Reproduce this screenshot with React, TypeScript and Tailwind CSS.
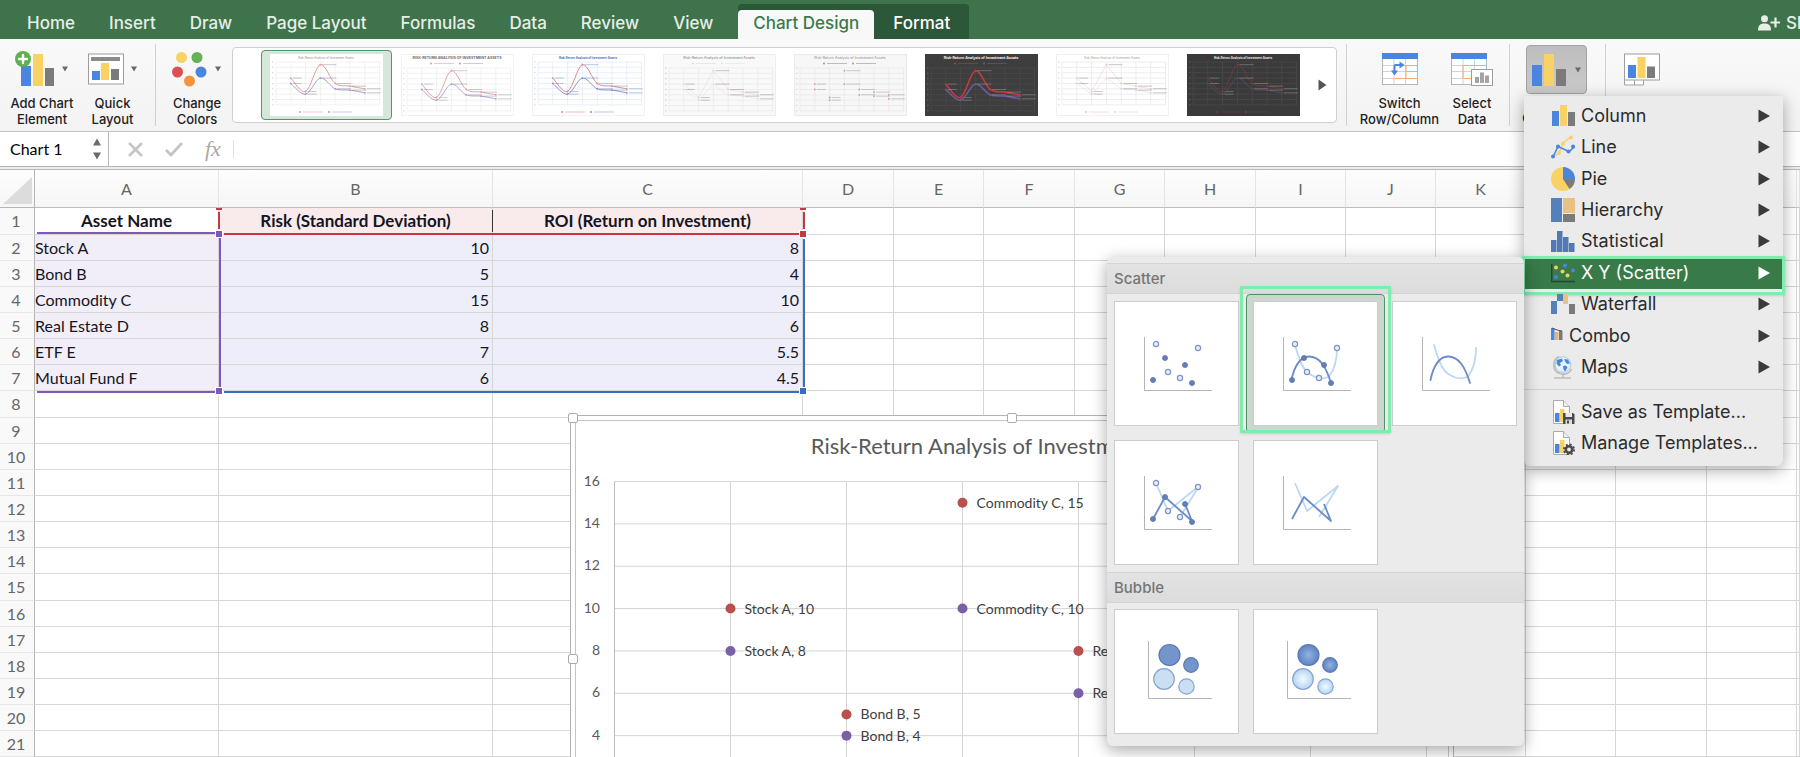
import React, { useState } from 'react';

type Asset = { name: string; risk: number; roi: number };

const assets: Asset[] = [
  { name: 'Stock A', risk: 10, roi: 8 },
  { name: 'Bond B', risk: 5, roi: 4 },
  { name: 'Commodity C', risk: 15, roi: 10 },
  { name: 'Real Estate D', risk: 8, roi: 6 },
  { name: 'ETF E', risk: 7, roi: 5.5 },
  { name: 'Mutual Fund F', risk: 6, roi: 4.5 },
];

const tabs = ['Home', 'Insert', 'Draw', 'Page Layout', 'Formulas', 'Data', 'Review', 'View'];
const columns = ['A', 'B', 'C', 'D', 'E', 'F', 'G', 'H', 'I', 'J', 'K', 'L', 'M', 'N', ''];
const columnWidths = [
  'w-[184px]',
  'w-[274px]',
  'w-[310px]',
  'w-[91px]',
  'w-[90px]',
  'w-[91px]',
  'w-[90px]',
  'w-[91px]',
  'w-[90px]',
  'w-[90px]',
  'w-[90px]',
  'w-[90px]',
  'w-[91px]',
  'w-[90px]',
  '',
];

const BLUE = '#4a86e0';
const YELLOW = '#f8d264';
const GRAY = '#7b7b7b';

/* ---------- small shared pieces ---------- */

const Caret = () => (
  <svg width="8" height="6" viewBox="0 0 8 6" className="shrink-0">
    <path d="M1 0.5h6L4 5.5z" fill="#6b6b6b" />
  </svg>
);

const Separator = () => <div className="my-[5px] w-px shrink-0 bg-[#d0d0d0]" />;

type RibbonButtonProps = {
  lines: [string, string];
  icon: React.ReactNode;
  caret?: boolean;
  className?: string;
};

const RibbonButton: React.FC<RibbonButtonProps> = ({ lines, icon, caret, className = '' }) => (
  <button type="button" className={`flex shrink-0 flex-col items-center ${className}`}>
    <span className="flex h-[56px] items-center gap-[6px] pt-1">
      {icon}
      {caret && <Caret />}
    </span>
    <span className="text-[13px] leading-4 font-medium whitespace-nowrap text-[#1e1e1e]">
      {lines[0]}
      <br />
      {lines[1]}
    </span>
  </button>
);

/* ---------- ribbon icons ---------- */

const AddElementIcon = () => (
  <svg width="40" height="36" viewBox="0 0 40 36">
    <rect x="6" y="15" width="10" height="20" fill={BLUE} />
    <rect x="18" y="3" width="10" height="32" fill={YELLOW} />
    <rect x="30" y="17" width="9" height="18" fill={GRAY} />
    <circle cx="8" cy="8" r="8" fill="#5fae52" />
    <path d="M8 4v8M4 8h8" stroke="#fff" strokeWidth="2.4" strokeLinecap="round" />
  </svg>
);

const QuickLayoutIcon = () => (
  <svg width="36" height="32" viewBox="0 0 36 32">
    <rect x="0.5" y="1" width="35" height="30" fill="#fff" stroke="#9c9c9c" />
    <rect x="3" y="4" width="29" height="4" fill="#8b8b8b" />
    <rect x="4" y="18" width="8" height="9" fill={BLUE} />
    <rect x="13" y="10" width="8" height="17" fill={YELLOW} />
    <rect x="23" y="16" width="8" height="11" fill={GRAY} />
  </svg>
);

const ColorsIcon = () => (
  <svg width="36" height="36" viewBox="0 0 36 36">
    <circle cx="9.5" cy="6.5" r="5.5" fill="#f8d264" />
    <circle cx="25" cy="6.5" r="5.5" fill="#67b257" />
    <circle cx="5.5" cy="21" r="5.5" fill="#dd5050" />
    <circle cx="29" cy="21" r="5.5" fill="#4a86e0" />
    <circle cx="17.5" cy="30" r="5.5" fill="#f4943f" />
  </svg>
);

const SheetGrid = () => (
  <>
    <rect x="0.5" y="1.5" width="35" height="31" fill="#fff" stroke="#b4b4b4" />
    <path d="M1 13.5h34M1 19.5h34M1 26.5h34M12 7v25M23.5 7v25" stroke="#d3d3d3" fill="none" />
    <rect x="0" y="1" width="36" height="6" fill={BLUE} />
  </>
);

const SwitchIcon = () => (
  <svg width="36" height="34" viewBox="0 0 36 34">
    <SheetGrid />
    <path d="M24 13.5h11M24 19.5h11M12 26.5h23M24 13v13" stroke="#f3ad74" fill="none" />
    <path d="M12.5 19v-5q0-1 1-1h5" stroke={BLUE} strokeWidth="2" fill="none" />
    <path d="M9 18.5h7l-3.5 5zM17.5 9.5v7l5-3.5z" fill={BLUE} />
  </svg>
);

const SelectDataIcon = () => (
  <svg width="42" height="35" viewBox="0 0 42 35">
    <SheetGrid />
    <path d="M12 13.5h23M12 26.5h10M12 13v13" stroke="#f3ad74" fill="none" />
    <rect x="20.5" y="17.5" width="21" height="16" fill="#fff" stroke="#9c9c9c" />
    <path d="M24 25h4v6h-4zM29 20.5h4v10.5h-4zM34 23.5h4v7.5h-4z" fill="#a3a3a3" />
  </svg>
);

const BarsIcon = () => (
  <svg width="34" height="32" viewBox="0 0 34 32">
    <rect x="0" y="11" width="10" height="21" fill={BLUE} />
    <rect x="12" y="0" width="10" height="32" fill={YELLOW} />
    <rect x="24" y="15" width="10" height="17" fill={GRAY} />
  </svg>
);

const MoveChartIcon = () => (
  <svg width="36" height="33" viewBox="0 0 36 33">
    <path d="M0.5 1v31h19v-5" fill="#fff" stroke="#a3a3a3" />
    <rect x="0.5" y="1" width="35" height="26" fill="#fff" stroke="#9c9c9c" />
    <path d="M10.5 27v5" stroke="#a3a3a3" />
    <rect x="4" y="12" width="8" height="13" fill={BLUE} />
    <rect x="13.5" y="4" width="8" height="21" fill={YELLOW} />
    <rect x="23" y="13.5" width="8" height="11.5" fill={GRAY} />
  </svg>
);

/* ---------- chart style gallery ---------- */

type ThumbStyle = {
  bg: string;
  grid: string;
  title: string;
  label: string;
  red?: string;
  purple?: string;
  width?: number;
  legendTop?: boolean;
  caps?: boolean;
  bold?: boolean;
  border?: string;
  straight?: boolean;
};

const thumbStyles: ThumbStyle[] = [
  { bg: '#fff', grid: '#ececec', title: '#8d8d8d', label: '#777', red: '#e29a9a', purple: '#a79dd0', width: 1 },
  { bg: '#fff', grid: '#ededed', title: '#6d6d6d', label: '#888', red: '#e29a9a', purple: '#a79dd0', width: 0.9, legendTop: true, caps: true, bold: true, border: '#f1f1f1' },
  { bg: '#fff', grid: '#dfeaf5', title: '#3d69b0', label: '#5c7bb0', red: '#d98a8a', purple: '#8b8ed0', width: 1, bold: true, border: '#f1f1f1' },
  { bg: '#f9f9f9', grid: '#e9e9e9', title: '#777', label: '#777', red: '#edd0d0', purple: '#e0dcec', width: 0.5, legendTop: true, border: '#ededed', straight: true },
  { bg: '#f7f7f7', grid: '#e6e6e6', title: '#8d8d8d', label: '#888', legendTop: true, border: '#ebebeb' },
  { bg: '#3e3e3e', grid: '#4b4b4b', title: '#f0f0f0', label: '#b5b5b5', red: '#c23a3f', purple: '#6c5a9c', width: 1.6, legendTop: true, bold: true },
  { bg: '#fff', grid: '#e6e6e6', title: '#999', label: '#777', red: '#ecc4c4', purple: '#d8d2e8', width: 0.5, border: '#f1f1f1', straight: true },
  { bg: '#3a3a3a', grid: '#4c4c4c', title: '#f0f0f0', label: '#b5b5b5', red: '#7e3b3e', purple: '#564f68', width: 0.8, bold: true },
];

const smoothPath = (pts: [number, number][]) =>
  pts.reduce((d, [x, y], i) => {
    if (i === 0) return `M${x} ${y}`;
    const p0 = pts[Math.max(0, i - 2)];
    const p1 = pts[i - 1];
    const p3 = pts[Math.min(pts.length - 1, i + 1)];
    const c1 = [p1[0] + (x - p0[0]) / 6, p1[1] + (y - p0[1]) / 6];
    const c2 = [x - (p3[0] - p1[0]) / 6, y - (p3[1] - p1[1]) / 6];
    return `${d}C${c1[0]} ${c1[1]} ${c2[0]} ${c2[1]} ${x} ${y}`;
  }, '');

const Thumb = ({ style }: { style: ThumbStyle }) => {
  const top = style.legendTop ? 14 : 8;
  const px = (i: number) => 6 + (i + 1) * 14.8;
  const py = (v: number) => top + (16 - v) * 2.68;
  const legendY = style.legendTop ? 9.5 : 58;
  const series = [
    { values: assets.map((a) => a.risk), stroke: style.red },
    { values: assets.map((a) => a.roi), stroke: style.purple },
  ];
  return (
    <svg width="113" height="62" viewBox="0 0 113 62" className="block">
      <rect x="0.5" y="0.5" width="112" height="61" fill={style.bg} stroke={style.border ?? style.bg} />
      {Array.from({ length: 9 }, (_, i) => (
        <path key={i} d={`M6 ${py(i * 2)}h104`} stroke={style.grid} strokeWidth="0.7" />
      ))}
      {Array.from({ length: 8 }, (_, i) => (
        <path key={i} d={`M${px(i - 1)} ${py(16)}V${py(0)}`} stroke={style.grid} strokeWidth="0.7" />
      ))}
      {Array.from({ length: 9 }, (_, i) => (
        <path key={i} d={`M2 ${py(i * 2)}h1.5`} stroke={style.label} strokeWidth="0.8" opacity="0.4" />
      ))}
      <text
        x="56"
        y="5"
        textAnchor="middle"
        fontSize={style.caps || style.legendTop ? 3.6 : 2.8}
        fontWeight={style.bold ? 700 : 400}
        fill={style.title}
      >
        {style.caps ? 'RISK-RETURN ANALYSIS OF INVESTMENT ASSETS' : 'Risk-Return Analysis of Investment Assets'}
      </text>
      {series.map(({ values, stroke }, s) => {
        const pts = values.map((v, i) => [px(i), py(v)] as [number, number]);
        const d = style.straight ? `M${pts.map((p) => p.join(' ')).join('L')}` : smoothPath(pts);
        return (
          <g key={s}>
            {stroke && <path d={d} fill="none" stroke={stroke} strokeWidth={style.width} />}
            {pts.map(([x, y], i) => (
              <g key={i}>
                <circle cx={x} cy={y} r="0.9" fill={stroke ?? '#c99'} />
                <path d={`M${x + 2} ${y}h${i === 1 || i === 0 ? 9 : 14}`} stroke={style.label} strokeWidth="0.8" opacity="0.5" />
              </g>
            ))}
            <circle cx={30 + s * 29} cy={legendY} r="1" fill={stroke ?? '#999'} />
            <path d={`M${33 + s * 29} ${legendY}h20`} stroke={stroke ?? style.label} strokeWidth="0.9" opacity="0.6" />
          </g>
        );
      })}
    </svg>
  );
};

const Gallery = () => {
  const [selected, setSelected] = useState(0);
  return (
    <div className="my-2 flex shrink-0 items-center rounded border border-[#cfcfcf] bg-white pl-7">
      {thumbStyles.map((style, i) => (
        <button
          key={i}
          type="button"
          aria-label={`Style ${i + 1}`}
          onClick={() => setSelected(i)}
          className={`rounded border px-[8px] py-[3px] ${
            i === selected ? 'border-[#4d9a62] bg-[#d7e6da]' : 'border-transparent'
          }`}
        >
          <Thumb style={style} />
        </button>
      ))}
      <button type="button" aria-label="More styles" className="px-[9px]">
        <svg width="9" height="12" viewBox="0 0 9 12">
          <path d="M0.5 0.5L8.5 6L0.5 11.5z" fill="#555" />
        </svg>
      </button>
    </div>
  );
};

/* ---------- scatter sub menu ---------- */

const open: [number, number][] = [
  [12, 7],
  [24, 35],
  [36, 41],
  [54, 11],
];
const solid: [number, number][] = [
  [9, 43],
  [21, 21],
  [41, 28],
  [48, 46],
];

const Axes = () => <path d="M0.5 0V53.5H68" fill="none" stroke="#b9b4b2" />;

const Dots = () => (
  <>
    {open.map(([x, y]) => (
      <circle key={x} cx={x} cy={y} r="2.6" fill="#e6effa" stroke="#7d94c4" strokeWidth="1.2" />
    ))}
    {solid.map(([x, y]) => (
      <circle key={x} cx={x} cy={y} r="2.5" fill="#6480b8" stroke="#5370a8" strokeWidth="0.8" />
    ))}
  </>
);

const Curves = () => (
  <g fill="none" strokeWidth="1.8" strokeLinecap="round">
    <path d="M12 8C16 22 20 34 28 38C34 42 43 43 47 38C52 31 54 22 54 11" stroke="#bcd8f5" />
    <path d="M8.5 43C11 30 17 19.5 26 19.5C37 19.5 43 30 48 46" stroke="#6b8cc8" />
  </g>
);

const Lines = () => (
  <g fill="none" strokeWidth="1.8" strokeLinejoin="round">
    <path d="M12 7L24 35L55 10L36 41" stroke="#bcd8f5" />
    <path d="M9 43L21 21L48 45L41 28" stroke="#6b8cc8" />
  </g>
);

const Bubbles = ({ shaded }: { shaded?: boolean }) => (
  <>
    <defs>
      <radialGradient id="bubbleDark">
        <stop offset="0" stopColor="#93b2de" />
        <stop offset="1" stopColor="#5f83c3" />
      </radialGradient>
      <radialGradient id="bubbleLight">
        <stop offset="0" stopColor="#f4faff" />
        <stop offset="1" stopColor="#b5d5f5" />
      </radialGradient>
    </defs>
    <path d="M4.5 -4V53.5H68" fill="none" stroke="#b9b4b2" />
    <g strokeWidth="1.2">
      <circle cx="25.5" cy="10" r="10.5" fill={shaded ? 'url(#bubbleDark)' : '#7495cc'} stroke="#5877b5" />
      <circle cx="47" cy="20" r="7.3" fill={shaded ? 'url(#bubbleDark)' : '#7495cc'} stroke="#5877b5" />
      <circle cx="20" cy="34" r="10.3" fill={shaded ? 'url(#bubbleLight)' : '#cbdff4'} stroke="#8aa3cf" />
      <circle cx="42.5" cy="41.5" r="7.7" fill={shaded ? 'url(#bubbleLight)' : '#cbdff4'} stroke="#8aa3cf" />
    </g>
  </>
);

const Tile = ({ label, selected, children }: { label: string; selected?: boolean; children: React.ReactNode }) => (
  <button type="button" aria-label={label} className="relative size-[125px]">
    {selected && (
      <>
        <span className="absolute -inset-[7px] rounded border border-[#4f9264] bg-[#ccd6ce]" />
        <span className="absolute -inset-x-[13px] -top-[15px] -bottom-[7px] border-[3px] border-[#80ecae] shadow-sm" />
      </>
    )}
    <span className="relative flex size-full items-center justify-center border border-[#cdcdcd] bg-white pl-[2px]">
      <svg width="68" height="54" viewBox="0 0 68 54" overflow="visible">
        {children}
      </svg>
    </span>
  </button>
);

const GroupHeading = ({ children }: { children: React.ReactNode }) => (
  <h3 className="h-[31px] border-y border-[#d4d4d4] bg-linear-to-b from-[#e3e3e3] to-[#dcdcdc] pl-[7px] text-[15px] leading-[30px] font-medium text-[#757575]">
    {children}
  </h3>
);

const ScatterMenu = () => (
  <div className="absolute top-[161px] right-full w-[417px] rounded-md bg-[#ebebeb] pt-[6px] pb-3 shadow-[0_4px_16px_rgba(0,0,0,0.35)]">
    <GroupHeading>Scatter</GroupHeading>
    <div className="flex flex-wrap gap-[14px] px-[7px] pt-[7px] pb-[7px]">
      <Tile label="Scatter">
        <Axes />
        <Dots />
      </Tile>
      <Tile label="Scatter with Smooth Lines and Markers" selected>
        <Axes />
        <Curves />
        <Dots />
      </Tile>
      <Tile label="Scatter with Smooth Lines">
        <Axes />
        <Curves />
      </Tile>
      <Tile label="Scatter with Straight Lines and Markers">
        <Axes />
        <Lines />
        <Dots />
      </Tile>
      <Tile label="Scatter with Straight Lines">
        <Axes />
        <Lines />
      </Tile>
    </div>
    <GroupHeading>Bubble</GroupHeading>
    <div className="flex gap-[14px] px-[7px] pt-[6px]">
      <Tile label="Bubble">
        <Bubbles />
      </Tile>
      <Tile label="3-D Bubble">
        <Bubbles shaded />
      </Tile>
    </div>
  </div>
);

/* ---------- chart type menu ---------- */

const Icon24 = ({ children }: { children: React.ReactNode }) => (
  <svg width="24" height="24" viewBox="0 0 24 24" className="shrink-0">
    {children}
  </svg>
);

const TemplatePage = ({ children }: { children: React.ReactNode }) => (
  <Icon24>
    <path d="M2.5 0.5h10l6 6v17h-16z" fill="#fff" stroke="#a9a9a9" />
    <path d="M12.5 0.5v6h6" fill="#eee" stroke="#a9a9a9" />
    <rect x="4" y="13" width="4.5" height="9" fill={BLUE} />
    <rect x="9" y="9" width="4.5" height="13" fill={YELLOW} />
    {children}
  </Icon24>
);

const menuIcons: Record<string, React.ReactNode> = {
  Column: (
    <Icon24>
      <rect x="1" y="7" width="7" height="15" fill={BLUE} />
      <rect x="9" y="1" width="7" height="21" fill={YELLOW} />
      <rect x="17" y="8" width="7" height="14" fill={GRAY} />
    </Icon24>
  ),
  Line: (
    <Icon24>
      <path d="M2 22L8 18L12 8L20 1.5" stroke={YELLOW} strokeWidth="1.5" fill="none" />
      <circle cx="8" cy="18" r="2" fill={YELLOW} />
      <circle cx="12" cy="8.5" r="2" fill={YELLOW} />
      <circle cx="20" cy="2.5" r="2" fill={YELLOW} />
      <path d="M2 22L7 11.5L18 16.5L24 11.5" stroke={BLUE} strokeWidth="1.6" fill="none" />
      <circle cx="2" cy="21.5" r="2" fill={BLUE} />
      <circle cx="7" cy="11.5" r="2" fill={BLUE} />
      <circle cx="17.5" cy="16.5" r="2" fill={BLUE} />
      <circle cx="22" cy="11.5" r="2" fill={BLUE} />
    </Icon24>
  ),
  Pie: (
    <Icon24>
      <circle cx="12" cy="12" r="12" fill={YELLOW} />
      <path d="M12 12V0A12 12 0 0 1 24 12z" fill={BLUE} />
      <path d="M12 12H24A12 12 0 0 1 18.5 22z" fill={GRAY} />
    </Icon24>
  ),
  Hierarchy: (
    <Icon24>
      <rect width="11" height="24" fill="#5580bb" />
      <rect x="12" width="12" height="15" fill="#e8c184" />
      <rect x="12" y="16" width="12" height="8" fill={GRAY} />
    </Icon24>
  ),
  Statistical: (
    <Icon24>
      <path d="M0 11h5.5v12H0zM6 2h5.5v21H6zM12 8h5.5v15H12zM18 14h5.5v9H18z" fill="#5278b5" />
    </Icon24>
  ),
  'X Y (Scatter)': (
    <Icon24>
      <path d="M0.7 3v17.5H24" stroke="#1f4a2c" strokeWidth="1.4" fill="none" />
      <g fill={BLUE}>
        <circle cx="14" cy="4.5" r="2" />
        <circle cx="22" cy="9.5" r="2" />
        <circle cx="5" cy="16" r="2" />
      </g>
      <g fill="#f3cf55">
        <circle cx="5" cy="6.5" r="2" />
        <circle cx="11.5" cy="10.5" r="2" />
        <circle cx="16.5" cy="14.5" r="2" />
      </g>
    </Icon24>
  ),
  Waterfall: (
    <Icon24>
      <path d="M0 9h6v13H0zM6 2h6v7H6z" fill="#5580bb" />
      <rect x="12" y="2" width="5" height="10" fill="#e8c184" />
      <rect x="18" y="12" width="6" height="10" fill={GRAY} />
    </Icon24>
  ),
  Combo: (
    <svg width="12" height="14" viewBox="0 0 12 14" className="mb-1 shrink-0">
      <rect x="0" y="1" width="3.5" height="12" fill={BLUE} />
      <rect x="4" y="5" width="3.5" height="8" fill="#e8b568" />
      <rect x="8" y="4" width="3.5" height="9" fill={GRAY} />
      <path d="M1 1L6 3L11 4" stroke="#555" fill="none" />
    </svg>
  ),
  Maps: (
    <Icon24>
      <path d="M8 1.5C1 5 1 16 9 18.5C14 20.5 19 18 20.5 14" stroke="#bdbdbd" strokeWidth="1.8" fill="none" />
      <path d="M12 19v4M3 23h17" stroke="#bdbdbd" strokeWidth="1.6" />
      <circle cx="12" cy="9.5" r="7.8" fill="#e8f2fb" stroke="#a9c9ea" />
      <path d="M6 5l5-1.5 1 2.5-3 2 1 2-2 1.5-2.5-3zM13 4l4 .5 2 4-3 .5-1.5-2zM12 11l3-.5 1.5 2-2.5 4-1.5-2z" fill={BLUE} />
    </Icon24>
  ),
  'Save as Template...': (
    <TemplatePage>
      <path d="M12 13h10l1.5 1.5V24H12z" fill="#4a4a4a" />
      <rect x="14.5" y="13" width="6.5" height="4" fill="#e8e8e8" />
      <rect x="14.5" y="19.5" width="6.5" height="4.5" fill="#dcdcdc" />
      <rect x="16" y="20.5" width="2" height="3" fill="#4a4a4a" />
    </TemplatePage>
  ),
  'Manage Templates...': (
    <TemplatePage>
      <circle cx="18" cy="18.5" r="3.2" fill="#ebebeb" stroke="#4a4a4a" strokeWidth="2.6" />
      <circle cx="18" cy="18.5" r="5" fill="none" stroke="#4a4a4a" strokeWidth="2" strokeDasharray="2 1.93" />
    </TemplatePage>
  ),
};

const chartTypes = ['Column', 'Line', 'Pie', 'Hierarchy', 'Statistical', 'X Y (Scatter)', 'Waterfall', 'Combo', 'Maps'];
const templateActions = ['Save as Template...', 'Manage Templates...'];

const MenuItem = ({ label, arrow }: { label: string; arrow?: boolean }) => {
  const active = label === 'X Y (Scatter)';
  return (
    <button
      type="button"
      role="menuitem"
      className={`relative flex min-h-[31px] w-full flex-1 items-center gap-[6px] pr-[13px] pl-[27px] text-left text-[18px] leading-6 ${
        active ? 'bg-[#387a48] text-white' : 'text-[#2b2b2b]'
      }`}
    >
      {active && (
        <span className="absolute -inset-x-[2px] -top-px -bottom-[6px] border-[3px] border-[#80ecae] shadow" />
      )}
      {menuIcons[label]}
      <span className="flex-1">{label}</span>
      {arrow && (
        <svg width="12" height="14" viewBox="0 0 12 14">
          <path d="M0.5 0.5L12 7L0.5 13.5z" fill={active ? '#fff' : '#3a3a3a'} />
        </svg>
      )}
    </button>
  );
};

const ChartTypeMenu = () => (
  <div
    role="menu"
    className="absolute top-[96px] left-0 z-20 -ml-[2px] w-[259px] rounded-b-md bg-[#ebebeb] text-left shadow-[0_4px_16px_rgba(0,0,0,0.35)]"
  >
    <div className="flex h-[287px] flex-col pt-1">
      {chartTypes.map((t) => (
        <MenuItem key={t} label={t} arrow />
      ))}
    </div>
    <hr className="my-[6px] border-[#d2d2d2]" />
    <div className="flex flex-col pb-2">
      {templateActions.map((t) => (
        <MenuItem key={t} label={t} />
      ))}
    </div>
    <ScatterMenu />
  </div>
);

/* ---------- page sections ---------- */

const TabBar = () => (
  <nav className="flex h-[39px] shrink-0 items-end overflow-hidden bg-[#3f734b] text-[17px] leading-8 font-medium text-[#e6eee8]">
    <div className="flex pl-[10px]">
      {tabs.map((t) => (
        <a key={t} href="#" className="px-[17px] whitespace-nowrap">
          {t}
        </a>
      ))}
    </div>
    <div className="ml-2 flex items-end rounded-t bg-[#2c5738] pt-[3px]">
      <a href="#" className="h-[29px] rounded-t-sm bg-[#f8f8f8] px-[15px] leading-[26px] whitespace-nowrap text-[#3b7a4c]">
        Chart Design
      </a>
      <a href="#" className="px-[19px] whitespace-nowrap text-white">
        Format
      </a>
    </div>
    <div className="ml-auto w-[42px] overflow-hidden">
      <button type="button" className="flex items-center gap-[6px] whitespace-nowrap">
        <svg width="22" height="16" viewBox="0 0 22 16" className="shrink-0">
          <circle cx="6.5" cy="3.8" r="3.5" fill="#e6eee8" />
          <path d="M0 15.5C0 10 2.5 8.5 6.5 8.5S13 10 13 15.5z" fill="#e6eee8" />
          <path d="M17.5 2.5v10M12.5 7.5h10" stroke="#e6eee8" strokeWidth="2.2" />
        </svg>
        Share
      </button>
    </div>
  </nav>
);

const Ribbon = () => (
  <div className="flex h-[93px] shrink-0 border-b border-[#c3c3c3] bg-linear-to-b from-[#f9f9f9] to-[#f3f3f3]">
    <RibbonButton lines={['Add Chart', 'Element']} icon={<AddElementIcon />} caret className="w-[84px]" />
    <RibbonButton lines={['Quick', 'Layout']} icon={<QuickLayoutIcon />} caret className="mr-[14px] w-[57px]" />
    <Separator />
    <RibbonButton lines={['Change', 'Colors']} icon={<ColorsIcon />} caret className="w-[76px] pl-[6px]" />
    <Gallery />
    <div className="ml-[9px] flex">
      <Separator />
      <RibbonButton lines={['Switch', 'Row/Column']} icon={<SwitchIcon />} className="w-[105px]" />
      <RibbonButton lines={['Select', 'Data']} icon={<SelectDataIcon />} className="mr-[17px] w-[40px]" />
      <Separator />
      <div className="relative -mt-[39px] mr-[18px] ml-4 w-[61px] pt-[45px]">
        <button
          type="button"
          aria-haspopup="menu"
          aria-expanded="true"
          aria-label="Change Chart Type"
          className="flex h-[49px] w-full items-center justify-center gap-2 rounded-sm border border-[#a3a3a3] bg-linear-to-b from-[#bdbdbd] to-[#cacaca]"
        >
          <BarsIcon />
          <Caret />
        </button>
        <p className="-mx-1 text-center text-[13px] leading-4 font-medium whitespace-nowrap">
          Change
          <br />
          Chart Type
        </p>
        <ChartTypeMenu />
      </div>
      <Separator />
      <RibbonButton lines={['Move', 'Chart']} icon={<MoveChartIcon />} className="w-[72px]" />
    </div>
  </div>
);

const FormulaBar = () => (
  <div className="flex h-[35px] shrink-0 items-stretch border-b border-[#b8b8b8] bg-white">
    <div className="flex w-[109px] shrink-0 items-center border-r border-[#b8b8b8] pr-[7px] pl-[10px]">
      <input
        aria-label="Name Box"
        defaultValue="Chart 1"
        className="w-0 flex-1 font-[Lato,'Liberation_Sans',sans-serif] text-[16px] text-black outline-none"
      />
      <svg width="8" height="22" viewBox="0 0 8 22" className="shrink-0">
        <path d="M0 7.5L4 0.5L8 7.5zM0 14.5h8L4 21.5z" fill="#6b6b6b" />
      </svg>
    </div>
    <div className="flex shrink-0 items-center gap-[22px] pl-[19px] text-[#c4c4c4]">
      <button type="button" aria-label="Cancel">
        <svg width="15" height="15" viewBox="0 0 15 15" stroke="currentColor" strokeWidth="2.5">
          <path d="M1 1L14 14M14 1L1 14" />
        </svg>
      </button>
      <button type="button" aria-label="Enter">
        <svg width="18" height="15" viewBox="0 0 18 15" fill="none" stroke="currentColor" strokeWidth="2.8">
          <path d="M1 8L6 13L17 1" />
        </svg>
      </button>
      <button type="button" className="font-['Liberation_Serif',serif] text-[22px] leading-6 text-[#a8a8a8] italic">
        fx
      </button>
    </div>
    <input aria-label="Formula" className="my-2 ml-3 min-w-0 flex-1 border-l border-[#e0e0e0] outline-none" />
  </div>
);

const Selection = () => (
  <div aria-hidden="true" className="pointer-events-none">
    <div className="absolute top-[62px] left-[37px] h-[2px] w-[178px] bg-[#8057bd]" />
    <div className="absolute top-[221px] left-[37px] h-[2px] w-[178px] bg-[#8057bd]" />
    <div className="absolute top-[67px] left-[219px] h-[150px] w-[2px] bg-[#8057bd]" />
    <div className="absolute top-[38px] left-[216px] h-[2px] w-[6px] bg-[#c23a42]" />
    <div className="absolute top-[42px] left-[218px] h-[17px] w-[2px] bg-[#c23a42]" />
    <div className="absolute top-[63px] left-[224px] h-[2px] w-[575px] bg-[#c23a42]" />
    <div className="absolute top-[40px] left-[492px] h-[22px] w-px bg-[#333]" />
    <div className="absolute top-[38px] left-[800px] h-[2px] w-[6px] bg-[#c23a42]" />
    <div className="absolute top-[42px] left-[803px] h-[17px] w-[2px] bg-[#c23a42]" />
    <div className="absolute top-[69px] left-[803px] h-[148px] w-[2px] bg-[#3c6bc4]" />
    <div className="absolute top-[221px] left-[224px] h-[2px] w-[575px] bg-[#3c6bc4]" />
    <div className="absolute top-[60px] left-[215px] size-[8px] border border-white bg-[#8057bd]" />
    <div className="absolute top-[217px] left-[215px] size-[8px] border border-white bg-[#8057bd]" />
    <div className="absolute top-[60px] left-[799px] size-[8px] border border-white bg-[#c23a42]" />
    <div className="absolute top-[217px] left-[799px] size-[8px] border border-white bg-[#3c6bc4]" />
  </div>
);

const RiskReturnChart = () => {
  const px = (n: number) => 44.5 + n * 116;
  const py = (v: number) => 66.5 + (16 - v) * 21.18;
  const handles = [
    'top-0 left-0',
    'top-0 left-1/2',
    'top-0 left-full',
    'top-1/2 left-0',
    'top-1/2 left-full',
    'top-full left-0',
    'top-full left-1/2',
    'top-full left-full',
  ];
  return (
    <div className="absolute top-[245px] left-[570px] h-[488px] w-[884px] border border-[#b3b3b3] bg-white p-1">
      <div className="size-full border border-[#c4c4c4]">
        <svg width="872" height="476" viewBox="6 6 872 476" className="font-[Lato,'Liberation_Sans',sans-serif]">
          <text x="442" y="39" textAnchor="middle" fontSize="22" fill="#595959">
            Risk-Return Analysis of Investment Assets
          </text>
          {Array.from({ length: 9 }, (_, i) => (
            <g key={i}>
              <path d={`M${px(0)} ${py(i * 2)}H${px(7)}`} stroke="#d5d5d5" />
              <text x="30" y={py(i * 2) + 4} textAnchor="end" fontSize="14" fill="#595959">
                {i * 2}
              </text>
            </g>
          ))}
          {Array.from({ length: 8 }, (_, i) => (
            <path key={i} d={`M${px(i)} ${py(16)}V${py(0)}`} stroke={i === 0 ? '#bdbdbd' : '#d5d5d5'} />
          ))}
          {assets.map((a, i) => (
            <g key={a.name} fontSize="14" fill="#404040">
              <circle cx={px(i + 1)} cy={py(a.risk)} r="5" fill="#b9504d" />
              <circle cx={px(i + 1)} cy={py(a.roi)} r="5" fill="#7a60a4" />
              <text x={px(i + 1) + 14} y={py(a.risk) + 5}>{`${a.name}, ${a.risk}`}</text>
              <text x={px(i + 1) + 14} y={py(a.roi) + 5}>{`${a.name}, ${a.roi}`}</text>
            </g>
          ))}
        </svg>
      </div>
      <div className="absolute inset-[2px]">
        {handles.map((pos) => (
          <span
            key={pos}
            className={`absolute size-[10px] -translate-x-1/2 -translate-y-1/2 rounded-xs border border-[#ababab] bg-white ${pos}`}
          />
        ))}
      </div>
    </div>
  );
};

const cell = 'border-r border-b border-[#d6d6d6] p-0';

const Sheet = () => (
  <div className="relative min-h-0 flex-1 overflow-hidden bg-white">
    <table className="w-full table-fixed border-separate border-spacing-0 font-[Lato,'Liberation_Sans',sans-serif] text-[16px] leading-6 text-[#15151f]">
      <colgroup>
        <col className="w-[35px]" />
        {columnWidths.map((w, i) => (
          <col key={i} className={w} />
        ))}
      </colgroup>
      <thead>
        <tr className="h-[38px] bg-linear-to-b from-[#fdfdfd] to-[#f6f6f6] text-[#666]">
          <th className="border-r border-b border-[#b5b5b5] p-0 align-bottom">
            <svg width="29" height="30" viewBox="0 0 29 30" className="mr-[2px] ml-auto">
              <path d="M0 27L29 0V27z" fill="#dcdcdc" />
            </svg>
          </th>
          {columns.map((c) => (
            <th key={c} scope="col" className="border-r border-b border-r-[#e4e4e4] border-b-[#bdbdbd] p-0 font-normal">
              {c}
            </th>
          ))}
        </tr>
      </thead>
      <tbody>
        {Array.from({ length: 21 }, (_, i) => {
          const asset = i > 0 ? assets[i - 1] : undefined;
          return (
            <tr key={i} className={i % 7 === 0 ? 'h-[27px]' : 'h-[26px]'}>
              <th
                scope="row"
                className="border-r border-b border-r-[#b5b5b5] border-b-[#e6e6e6] bg-[#f9f9f9] p-0 pr-[2px] text-center font-normal text-[#666]"
              >
                {i + 1}
              </th>
              {i === 0 && (
                <>
                  <td className={`${cell} text-center text-[17px] font-bold`}>Asset Name</td>
                  <td className={`${cell} bg-[#f9ebec] text-center text-[17px] font-bold`}>Risk (Standard Deviation)</td>
                  <td className={`${cell} bg-[#f9ebec] text-center text-[17px] font-bold`}>ROI (Return on Investment)</td>
                </>
              )}
              {asset && (
                <>
                  <td className={`${cell} border-[#cfcddc] bg-[#f1eef8]`}>{asset.name}</td>
                  <td className={`${cell} border-[#cfcfdd] bg-[#eeeefa] pr-[3px] text-right`}>{asset.risk}</td>
                  <td className={`${cell} border-[#cfcfdd] bg-[#eeeefa] pr-[3px] text-right`}>{asset.roi}</td>
                </>
              )}
              {i > assets.length && columns.slice(0, 3).map((c) => <td key={c} className={cell} />)}
              {columns.slice(3).map((c) => (
                <td key={c} className={cell} />
              ))}
            </tr>
          );
        })}
      </tbody>
    </table>
    <Selection />
    <RiskReturnChart />
  </div>
);

const App: React.FC = () => (
  <div className="flex h-screen flex-col overflow-hidden bg-[#f3f3f3] font-[Inter,'Liberation_Sans',sans-serif]">
    <TabBar />
    <Ribbon />
    <FormulaBar />
    <div className="h-[3px] shrink-0 border-b border-[#b8b8b8] bg-[#ececec]" />
    <Sheet />
  </div>
);

export default App;
